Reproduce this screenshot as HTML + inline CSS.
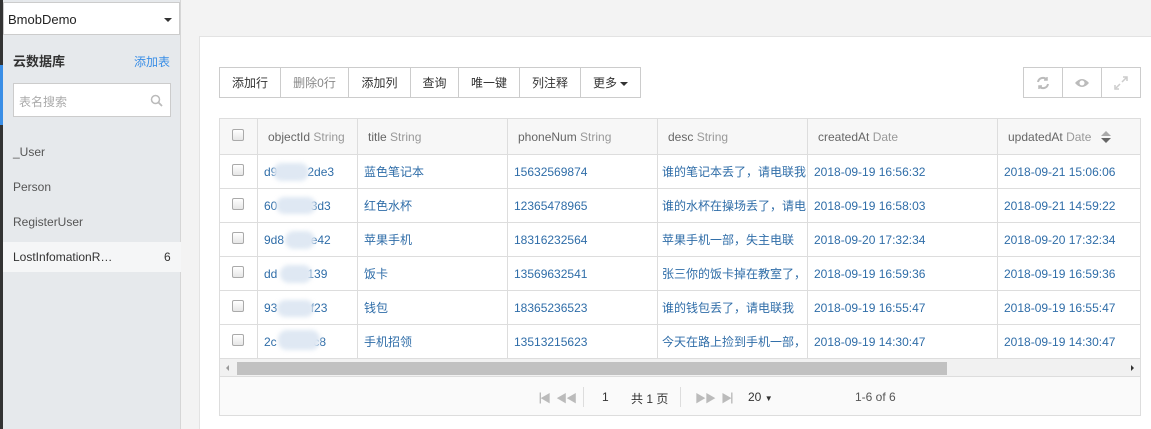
<!DOCTYPE html><html><head><meta charset="utf-8"><style>
*{box-sizing:border-box;margin:0;padding:0}
body{width:1151px;height:429px;overflow:hidden;background:#f3f3f3;font-family:"Liberation Sans","Noto Sans CJK SC",sans-serif;font-size:12px;color:#333;position:relative}
.a{position:absolute}
.tb{position:absolute;top:67px;height:31px;border:1px solid #ccc;background:#fff;display:flex}
.tb div{border-right:1px solid #ccc;display:flex;align-items:center;justify-content:center;font-size:12px;color:#333}
.tb div:last-child{border-right:none}
table{border-collapse:collapse;position:absolute;left:219px;top:118px;table-layout:fixed;width:921px}
td,th{border:1px solid #ddd;height:34px;padding:0 6px;white-space:nowrap;overflow:hidden;font-weight:normal;text-align:left;color:#2f6da8;font-size:12px}
th{height:36px;background:#f7f7f7;color:#666;font-size:12px;padding-left:10px}
th span{color:#999}
.cb{width:12px;height:12px;border:1px solid #aaa;border-radius:2px;background:linear-gradient(#fff,#e6e6e6);display:inline-block;margin-left:6px}
.blur{position:absolute;background:#dfe8f3;border-radius:9px;filter:blur(2px)}
</style></head><body>
<div class="a" style="left:0;top:0;width:3px;height:429px;background:#333"></div>
<div class="a" style="left:0;top:65px;width:3px;height:60px;background:#3a8ee6"></div>
<div class="a" style="left:3px;top:0;width:178px;height:429px;background:#e6e9ec;border-right:1px solid #d6d6d6"></div>
<div class="a" style="left:3px;top:2px;width:177px;height:33px;background:#fff;border:1px solid #ccc;padding:9px 4px;font-size:13px;color:#222">BmobDemo<span class="a" style="right:7px;top:15px;border:4px solid transparent;border-top:4px solid #333;border-bottom:0"></span></div>
<div class="a" style="left:13px;top:51px;font-size:13px;font-weight:bold;color:#333">云数据库</div>
<div class="a" style="left:134px;top:53px;font-size:12px;color:#3a8ee6">添加表</div>
<div class="a" style="left:13px;top:83px;width:158px;height:34px;background:#fff;border:1px solid #ccc;padding:9px 5px;color:#aaa">表名搜索
<svg class="a" style="right:7px;top:10px" width="13" height="13" viewBox="0 0 13 13"><circle cx="5.5" cy="5.5" r="4" fill="none" stroke="#bbb" stroke-width="1.5"/><line x1="8.5" y1="8.5" x2="12" y2="12" stroke="#bbb" stroke-width="1.8"/></svg></div>
<div class="a" style="left:13px;top:145px;color:#555;font-size:12px">_User</div>
<div class="a" style="left:13px;top:180px;color:#555;font-size:12px">Person</div>
<div class="a" style="left:13px;top:215px;color:#555;font-size:12px">RegisterUser</div>
<div class="a" style="left:3px;top:242px;width:178px;height:30px;background:#f5f6f7"></div>
<div class="a" style="left:13px;top:250px;color:#333;font-size:12px">LostInfomationR…</div>
<div class="a" style="left:164px;top:250px;color:#333;font-size:12px">6</div>
<div class="a" style="left:199px;top:36px;width:952px;height:393px;background:#fff;border-left:1px solid #e3e3e3;border-top:1px solid #e3e3e3"></div>
<div class="tb" style="left:219px;width:422px">
<div style="width:61px">添加行</div><div style="width:68px;color:#888">删除0行</div><div style="width:62px">添加列</div><div style="width:48px">查询</div><div style="width:61px">唯一键</div><div style="width:61px">列注释</div><div style="width:59px">更多<span style="border:4px solid transparent;border-top:4px solid #333;border-bottom:0;margin-left:3px;margin-top:3px"></span></div></div>
<div class="tb" style="left:1023px;width:118px">
<div style="width:39px"><svg width="14" height="14" viewBox="0 0 14 14" fill="none" stroke="#bbb" stroke-width="2"><path d="M2 6a5 5 0 0 1 9-2M12 8a5 5 0 0 1-9 2"/><path d="M11 1v3h-3M3 13v-3h3" stroke-width="1.5"/></svg></div>
<div style="width:39px"><svg width="16" height="12" viewBox="0 0 16 12"><path d="M1 6Q8-2 15 6Q8 14 1 6Z" fill="#bbb"/><circle cx="8" cy="6" r="2.5" fill="#fff"/></svg></div>
<div style="width:38px"><svg width="14" height="14" viewBox="0 0 14 14" stroke="#ccc" stroke-width="1.5"><path d="M8 6l5-5M2 12l4-4"/><path d="M9 1h4v4M1 9v4h4" fill="none"/></svg></div></div>
<table>
<colgroup><col style="width:38px"><col style="width:100px"><col style="width:150px"><col style="width:150px"><col style="width:150px"><col style="width:190px"><col style="width:143px"></colgroup>
<tr><th><span class="cb" style="margin-left:2px"></span></th><th>objectId <span>String</span></th><th>title <span>String</span></th><th>phoneNum <span>String</span></th><th>desc <span>String</span></th><th>createdAt <span>Date</span></th><th>updatedAt <span>Date</span> <svg width="10" height="12" viewBox="0 0 10 12" style="vertical-align:middle;margin-left:6px"><path d="M5 0L10 5H0Z" fill="#aaa"/><path d="M0 7H10L5 12Z" fill="#666"/></svg></th></tr>
<tr><td><span class="cb"></span></td><td>d9&nbsp;&nbsp;&nbsp;&nbsp;&nbsp;&nbsp;&nbsp;&nbsp;&nbsp;2de3</td><td>蓝色笔记本</td><td>15632569874</td><td style="padding:0 4px">谁的笔记本丢了，请电联我</td><td>2018-09-19 16:56:32</td><td>2018-09-21 15:06:06</td></tr>
<tr><td><span class="cb"></span></td><td>60&nbsp;&nbsp;&nbsp;&nbsp;&nbsp;&nbsp;&nbsp;&nbsp;&nbsp;&nbsp;3d3</td><td>红色水杯</td><td>12365478965</td><td style="padding:0 4px">谁的水杯在操场丢了，请电</td><td>2018-09-19 16:58:03</td><td>2018-09-21 14:59:22</td></tr>
<tr><td><span class="cb"></span></td><td>9d8&nbsp;&nbsp;&nbsp;&nbsp;&nbsp;&nbsp;&nbsp;&nbsp;e42</td><td>苹果手机</td><td>18316232564</td><td style="padding:0 4px">苹果手机一部，失主电联</td><td>2018-09-20 17:32:34</td><td>2018-09-20 17:32:34</td></tr>
<tr><td><span class="cb"></span></td><td>dd&nbsp;&nbsp;&nbsp;&nbsp;&nbsp;&nbsp;&nbsp;&nbsp;&nbsp;139</td><td>饭卡</td><td>13569632541</td><td style="padding:0 4px">张三你的饭卡掉在教室了，</td><td>2018-09-19 16:59:36</td><td>2018-09-19 16:59:36</td></tr>
<tr><td><span class="cb"></span></td><td>93&nbsp;&nbsp;&nbsp;&nbsp;&nbsp;&nbsp;&nbsp;&nbsp;&nbsp;&nbsp;f23</td><td>钱包</td><td>18365236523</td><td style="padding:0 4px">谁的钱包丢了，请电联我</td><td>2018-09-19 16:55:47</td><td>2018-09-19 16:55:47</td></tr>
<tr><td><span class="cb"></span></td><td>2c&nbsp;&nbsp;&nbsp;&nbsp;&nbsp;&nbsp;&nbsp;&nbsp;&nbsp;&nbsp;&nbsp;c8</td><td>手机招领</td><td>13513215623</td><td style="padding:0 4px">今天在路上捡到手机一部，</td><td>2018-09-19 14:30:47</td><td>2018-09-19 14:30:47</td></tr>
</table>
<div class="blur" style="left:273px;top:163px;width:36px;height:18px"></div>
<div class="blur" style="left:276px;top:197px;width:40px;height:17px"></div>
<div class="blur" style="left:285px;top:231px;width:30px;height:18px"></div>
<div class="blur" style="left:280px;top:265px;width:32px;height:18px"></div>
<div class="blur" style="left:277px;top:300px;width:37px;height:17px"></div>
<div class="blur" style="left:278px;top:330px;width:42px;height:20px"></div>
<div class="a" style="left:219px;top:359px;width:922px;height:18px;background:#f1f1f1;border:1px solid #ddd;border-top:none"></div>
<div class="a" style="left:237px;top:362px;width:710px;height:13px;background:#c1c1c1"></div>
<div class="a" style="left:226px;top:365px;border:3px solid transparent;border-right:3px solid #999;border-left:0"></div>
<div class="a" style="left:1131px;top:365px;border:3px solid transparent;border-left:3px solid #333;border-right:0"></div>
<div class="a" style="left:219px;top:377px;width:922px;height:39px;background:#fafafa;border:1px solid #ddd;border-top:none"></div>
<div class="a" style="left:530px;top:390px;color:#bbb;font-size:11px;letter-spacing:-1px">▕◀&nbsp;&nbsp;&nbsp;◀◀</div>
<div class="a" style="left:583px;top:387px;width:1px;height:20px;background:#ddd"></div>
<div class="a" style="left:602px;top:390px;color:#333">1</div>
<div class="a" style="left:631px;top:390px;color:#333">共 1 页</div>
<div class="a" style="left:680px;top:387px;width:1px;height:20px;background:#ddd"></div>
<div class="a" style="left:695px;top:390px;color:#bbb;font-size:11px;letter-spacing:-1px">▶▶&nbsp;&nbsp;&nbsp;▶▏</div>
<div class="a" style="left:748px;top:390px;color:#333">20 <span style="font-size:8px">▼</span></div>
<div class="a" style="left:855px;top:390px;color:#555">1-6 of 6</div>
</body></html>
